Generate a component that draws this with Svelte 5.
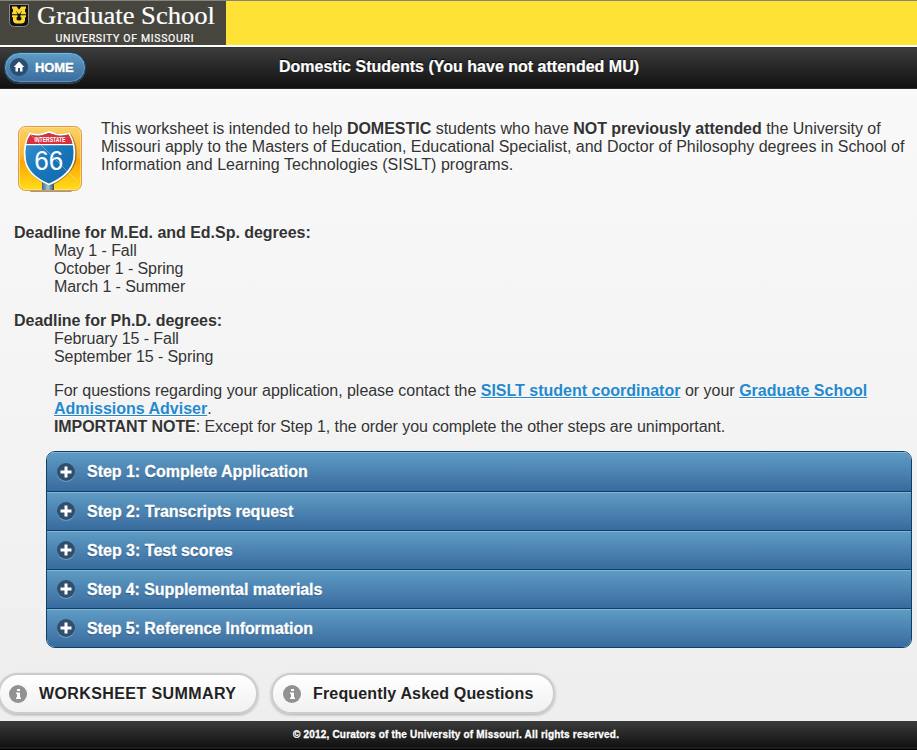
<script>
  const steps = [
    { label: 'Step 1: Complete Application', spacing: -0.035 },
    { label: 'Step 2: Transcripts request', spacing: 0 },
    { label: 'Step 3: Test scores', spacing: 0 },
    { label: 'Step 4: Supplemental materials', spacing: -0.07 },
    { label: 'Step 5: Reference Information', spacing: -0.06 }
  ];
  const buttons = [
    { label: 'WORKSHEET SUMMARY', kind: 'summary' },
    { label: 'Frequently Asked Questions', kind: 'faq' }
  ];
</script>

<div class="page">
  <div class="banner">
    <svg class="logo" width="226" height="45" viewBox="0 0 226 45">
      <rect width="226" height="45" fill="#46463e" />
      <path d="M9.5 4.5H28.5V21.5Q28.5 26.5 23.5 26.5H14.5Q9.5 26.5 9.5 21.5Z" fill="#111" stroke="#8b8b86" />
      <path d="M12 6.5H16.8L19 9.8L21.2 6.5H26V8.8H25V12.2H26V14.3H20.8V12.2H21.8V11L19 14.3L16.2 11V12.2H17.2V14.3H12V12.2H13V8.8H12Z" fill="#fcd72f" />
      <path d="M12 15.3H17.6V17.3H16.6V19.4Q17 20.5 19 20.5T21.4 19.4V17.3H20.4V15.3H26V17.3H25V20.2Q24.5 23.4 21.5 23.4H16.5Q13.5 23.4 13 20.2V17.3H12Z" fill="#fcd72f" />
      <text class="school" x="37" y="24" textLength="178" lengthAdjust="spacingAndGlyphs">Graduate School</text>
      <text class="univ" x="55.5" y="41.7" textLength="138" lengthAdjust="spacing">UNIVERSITY OF MISSOURI</text>
    </svg>
  </div>

  <header>
    <a class="home" href="#home">
      <svg width="20" height="20" viewBox="0 0 20 20">
        <circle cx="10" cy="10" r="9" fill="#2b4e70" />
        <path d="M10 4.5L4.7 10H6.5V14.5H9V11H11V14.5H13.5V10H15.3Z" fill="#fff" />
      </svg>
      <span>HOME</span>
    </a>
    <h1>Domestic Students (You have not attended MU)</h1>
  </header>

  <main>
    <section class="intro">
      <svg class="sign" width="68" height="70" viewBox="0 0 68 70">
        <defs>
          <linearGradient id="gold" x1="0" y1="0" x2="0" y2="1">
            <stop offset="0" stop-color="#fbd36b" />
            <stop offset=".45" stop-color="#fbb42c" />
            <stop offset=".55" stop-color="#faa506" />
            <stop offset="1" stop-color="#ffdf1a" />
          </linearGradient>
          <linearGradient id="shield" x1="0" y1="0" x2="1" y2="1">
            <stop offset="0" stop-color="#3f94d2" />
            <stop offset=".5" stop-color="#1878be" />
            <stop offset="1" stop-color="#1266a9" />
          </linearGradient>
          <linearGradient id="post">
            <stop offset="0" stop-color="#376d8d" />
            <stop offset=".5" stop-color="#a8c8d5" />
            <stop offset="1" stop-color="#245673" />
          </linearGradient>
        </defs>
        <rect x="14" y="64" width="42" height="3" rx="1.5" fill="#999" />
        <rect x="2.5" y="1.5" width="63" height="64" rx="7" fill="url(#gold)" stroke="#e7964b" />
        <rect x="3.5" y="2.5" width="61" height="62" rx="6" fill="none" stroke="#ffe795" stroke-opacity=".7" />
        <rect x="26" y="55" width="12" height="10" fill="url(#post)" />
        <path d="M15 9Q21 11 25 10Q30 8 34 10Q39 7 43 9Q48 11 55 9Q62 19 60.5 34Q58 49 35 61Q14 54 10 38Q6 23 15 9Z" fill="#765b2d" opacity=".65" />
        <path d="M14 8.5Q20 10.5 25 9.5Q30 8 33 7Q36 8 41 9.5Q46 10.5 53 8.5Q60 20 58 34Q55 50 33 59.5Q11 50 9 34Q7 20 14 8.5Z" fill="url(#shield)" stroke="#fff" stroke-width="1.7" />
        <path d="M14.5 9.5Q21 11.5 25 10.5Q30 9 33 8Q36 9 41 10.5Q46 11.5 52.5 9.5Q55 13 56.5 19H10.5Q11.5 13 14.5 9.5Z" fill="#d9303d" />
        <path d="M10 19.7H57" stroke="#fff" stroke-width="1.3" />
        <path d="M7 2L61 56" stroke="#fff" opacity=".3" />
        <text class="interstate" x="18.5" y="17.4" textLength="31" lengthAdjust="spacingAndGlyphs">INTERSTATE</text>
        <text class="route" x="18.3" y="45.2" textLength="29" lengthAdjust="spacingAndGlyphs">66</text>
      </svg>
      <p>This worksheet is intended to help <b>DOMESTIC</b> students who have <b class="not">NOT previously attended</b> the University of<br />Missouri apply to the Masters of Education, Educational Specialist, and Doctor of Philosophy degrees in School of<br /><span class="sislt">Information and Learning Technologies (SISLT) programs.</span></p>
    </section>

    <dl>
      <dt>Deadline for M.Ed. and Ed.Sp. degrees:</dt>
      <dd>May 1 - Fall</dd>
      <dd>October 1 - Spring</dd>
      <dd>March 1 - Summer</dd>
    </dl>
    <dl>
      <dt>Deadline for Ph.D. degrees:</dt>
      <dd>February 15 - Fall</dd>
      <dd>September 15 - Spring</dd>
    </dl>

    <p class="contact"><span class="lead">For questions regarding your application, please contact the</span> <a href="#coordinator">SISLT student coordinator</a> or your <a href="#adviser">Graduate School<br />Admissions Adviser</a>.<br /><span class="note"><b>IMPORTANT NOTE</b>: Except for Step 1, the order you complete the other steps are unimportant.</span></p>

    <div class="steps">
      {#each steps as step}
        <div class="step">
          <svg width="20" height="20" viewBox="0 0 20 20">
            <circle cx="10" cy="10.8" r="9" fill="#7ca7cc" />
            <circle cx="10" cy="10" r="9" fill="#2f4f6c" />
            <path d="M10 4.5V15.5M4.5 10H15.5" stroke="#fff" stroke-width="3" />
          </svg>
          <span style="letter-spacing: {step.spacing}px">{step.label}</span>
        </div>
      {/each}
    </div>

    <div class="buttons">
      {#each buttons as button}
        <div class="button {button.kind}">
          <svg width="18" height="18" viewBox="0 0 18 18">
            <circle cx="9" cy="9" r="9" fill="#929292" />
            <path d="M8 4H11V6H8ZM7 7.5H11V12.5H12V14H7V12.5H8V9H7Z" fill="#fff" />
          </svg>
          <span>{button.label}</span>
        </div>
      {/each}
    </div>
  </main>

  <footer>© 2012, Curators of the University of Missouri. All rights reserved.</footer>
</div>

<style>
  .page {
    box-sizing: border-box;
    width: 917px;
    height: 750px;
    overflow: hidden;
    display: flex;
    flex-direction: column;
    background: #fff;
    color: #333;
    font: 16px/18px "Liberation Sans", Arial, sans-serif;
  }
  p, dl, dd, h1 { margin: 0; }
  svg { display: block; flex: none; }
  .banner {
    box-sizing: border-box;
    height: 45px;
    flex: none;
    overflow: hidden;
    margin-bottom: 2px;
    border-top: 1px solid #85857b;
    background: #ffe236;
  }
  .school { font: 26px "Liberation Serif", serif; fill: #fff; stroke: #fff; stroke-width: .2px; }
  .univ { font: 10.5px Roboto, sans-serif; fill: #fff; stroke: #fff; stroke-width: .2px; }
  .logo { margin-top: -1px; }
  header {
    box-sizing: border-box;
    height: 42px;
    flex: none;
    display: grid;
    grid-template-columns: 1fr auto 1fr;
    align-items: center;
    border-top: 1px solid #333;
    border-bottom: 1px solid #2a2a2a;
    background: linear-gradient(#3c3c3c, #111);
    color: #fff;
    text-shadow: 0 -1px 1px #000;
  }
  .home {
    box-sizing: border-box;
    width: 82px;
    height: 31px;
    margin-left: 4px;
    margin-top: -2px;
    padding-left: 4px;
    display: flex;
    align-items: center;
    gap: 6px;
    border: 1px solid #145072;
    border-radius: 16px;
    background: linear-gradient(#5f9cc5, #396b9e);
    box-shadow: inset 0 0 1px 1px rgba(255,255,255,.25), 0 1px 0 rgba(255,255,255,.2);
    color: #fff;
    font-size: 13px;
    font-weight: bold;
    letter-spacing: -.1px;
    text-decoration: none;
    text-shadow: 0 1px 1px #254f7a;
    -webkit-text-stroke: .4px #fff;
  }
  .home span { padding-top: 1px; }
  h1 {
    font-size: 16px;
    line-height: 18px;
    font-weight: bold;
    letter-spacing: .01px;
    white-space: nowrap;
    margin: -3px 0 0 1px;
    -webkit-text-stroke: .2px #fff;
  }
  main {
    height: 632px;
    flex: none;
    background: linear-gradient(#f9f9f9, #eee);
    text-shadow: 0 1px 0 #fff;
    white-space: nowrap;
  }
  .intro { display: flex; height: 104px; padding: 31px 0 0 16px; gap: 17px; }
  .intro p { letter-spacing: -.014px; }
  .intro .not { letter-spacing: -.04px; }
  .intro .sislt { letter-spacing: .035px; }
  .sign { margin-top: 5px; text-shadow: none; }
  .interstate { font: bold 6.5px "Liberation Sans", sans-serif; fill: #fff; }
  .route { font: 28px "Liberation Sans", sans-serif; fill: #fff; }
  dl { margin: 0 0 16px 14px; }
  dt { font-weight: bold; letter-spacing: -.03px; }
  dd { margin-left: 40px; letter-spacing: -.08px; }
  .contact { margin-left: 54px; }
  .lead { letter-spacing: -.033px; }
  .note { letter-spacing: -.08px; }
  a { color: #2489ce; font-weight: bold; }
  .steps {
    box-sizing: border-box;
    width: 866px;
    margin: 15px 0 0 46px;
    border: 1px solid #0c4065;
    border-radius: 9px;
    overflow: hidden;
  }
  .step {
    box-sizing: border-box;
    height: 39px;
    padding: 1px 0 0 9px;
    display: flex;
    align-items: center;
    gap: 11px;
    border-top: 1px solid #0c4065;
    background: linear-gradient(#5f9cc5, #396b9e);
    box-shadow: inset 0 1px 0 #83b5d5;
    color: #fff;
    font-weight: bold;
    text-shadow: 0 1px 1px #254f7a;
    -webkit-text-stroke: .3px #fff;
  }
  .step:first-child { border-top: 0; }
  .step:not(:first-child) svg { margin-bottom: 2px; }
  .buttons { display: flex; gap: 13px; margin: 25px 0 0 -2px; }
  .button {
    box-sizing: border-box;
    height: 41px;
    padding-left: 9px;
    display: flex;
    align-items: center;
    gap: 12px;
    border: 2px solid #ccc;
    border-radius: 20px;
    background: linear-gradient(#fff, #f1f1f1);
    background-clip: padding-box;
    box-shadow: 0 1px 3px rgba(0,0,0,.28);
    color: #222;
    font-weight: bold;
  }
  .summary { width: 260px; letter-spacing: .4px; }
  .faq { width: 284px; padding-left: 10px; letter-spacing: .16px; }
  footer {
    box-sizing: border-box;
    height: 29px;
    flex: none;
    padding: 0 5px 2px 0;
    display: flex;
    align-items: center;
    justify-content: center;
    background: linear-gradient(#3c3c3c, #111 26px, #333 27px, #000 28px);
    color: #fff;
    font-size: 10px;
    font-weight: bold;
    letter-spacing: .2px;
    -webkit-text-stroke: .3px #fff;
  }
</style>
